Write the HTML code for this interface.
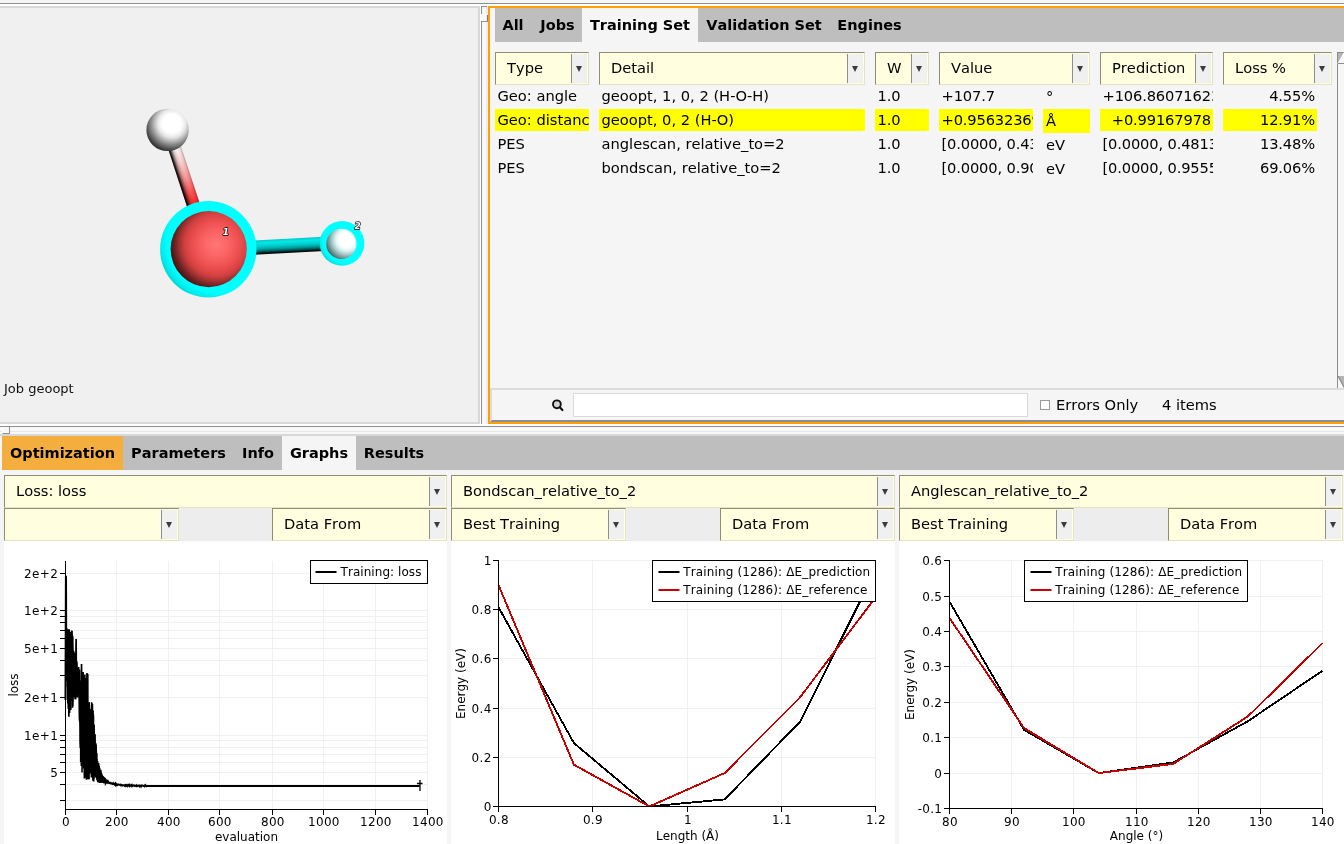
<!DOCTYPE html>
<html lang="en">
<head>
<meta charset="utf-8">
<title>ParAMS</title>
<style>
html,body{margin:0;padding:0;}
body{width:1344px;height:844px;overflow:hidden;background:#f5f5f5;position:relative;
 font-family:"DejaVu Sans","Liberation Sans",sans-serif;font-size:14.67px;color:#000;font-kerning:none;font-variant-ligatures:none;}
#w{position:absolute;left:0;top:0;width:1344px;height:844px;overflow:hidden;will-change:transform;}
.a{position:absolute;white-space:pre;overflow:hidden;}
.t{position:absolute;white-space:pre;}
svg{position:absolute;left:0;top:0;overflow:visible;}
svg text{font-family:"DejaVu Sans","Liberation Sans",sans-serif;font-kerning:none;}
/* tab bars */
.tabbar{position:absolute;background:#bebebe;height:34px;}
.tab{position:absolute;top:0;height:34px;line-height:34px;font-weight:bold;font-size:14.5px;white-space:pre;text-align:center;}
.tab.sel{background:#f5f5f5;}
.tab.org{background:#f4ae3e;}
/* combobox */
.cb{position:absolute;box-sizing:border-box;height:33px;background:#ffffe0;
 border-top:1px solid #8e8e76;border-left:1px solid #8e8e76;border-bottom:1px solid #e4e4c4;border-right:1px solid #e4e4c4;}
.cb .lb{position:absolute;left:11px;top:-1px;line-height:31px;white-space:pre;}
.cb .bt{position:absolute;right:1px;top:1px;bottom:1px;width:16px;background:#f0f0f0;border-left:1px solid #8e8e8e;box-sizing:border-box;}
.cb .bt:after{content:"";position:absolute;left:3.7px;top:12.2px;border-left:3.8px solid transparent;border-right:3.8px solid transparent;border-top:6.6px solid #3c3c3c;}
/* table rows */
.c{position:absolute;height:22px;line-height:22px;white-space:pre;overflow:hidden;box-sizing:border-box;padding:0 2px 0 2.5px;}
.c.r{text-align:right;padding:0 2px 0 0;}
.c.y{background:#ffff00;}
.c.n{letter-spacing:-0.15px;}
.c.u{height:24px;line-height:24px;padding-left:3px;}
</style>
</head>
<body>
<div id="w">
<!-- top window strips -->
<div class="a" style="left:0;top:3px;width:1344px;height:1px;background:#8f8f8f"></div>
<div class="a" style="left:0;top:4px;width:1344px;height:2px;background:#ffffff"></div>

<!-- left (molecule) panel -->
<div class="a" style="left:0;top:6px;width:480px;height:418px;background:#d8d8d8"></div>
<div class="a" style="left:0;top:8px;width:478px;height:414px;background:#f0f0f0"></div>
<div class="t" style="left:4px;top:381px;font-size:13px;line-height:16px;color:#111">Job geoopt</div>

<!-- vertical sash between panels -->
<div class="a" style="left:480px;top:6px;width:1px;height:418px;background:#ffffff"></div>
<div class="a" style="left:481px;top:6px;width:1px;height:418px;background:#8f8f8f"></div>
<div class="a" style="left:482px;top:6px;width:4px;height:418px;background:#f8f8f8"></div>
<div class="a" style="left:486px;top:6px;width:2px;height:418px;background:#e9ecf2"></div>
<!-- sash handle -->
<div class="a" style="left:481px;top:6px;width:6px;height:1px;background:#8f8f8f"></div>
<div class="a" style="left:480px;top:14px;width:7px;height:1px;background:#ffffff"></div>
<div class="a" style="left:487px;top:15px;width:1px;height:7px;background:#7a7a7a"></div>
<div class="a" style="left:481px;top:14px;width:1px;height:7px;background:#f8f8f8"></div>
<div class="a" style="left:481px;top:21px;width:7px;height:1px;background:#8f8f8f"></div>

<!-- table panel with orange focus border -->
<div class="a" style="left:488px;top:6px;width:900px;height:418px;box-sizing:border-box;border:2px solid #ffa000;background:#f5f5f5"></div>

<!-- top notebook tabs -->
<div class="tabbar" style="left:495px;top:8px;width:860px">
  <div class="tab" style="left:0;width:36px">All</div>
  <div class="tab" style="left:37px;width:51px">Jobs</div>
  <div class="tab sel" style="left:87px;width:116px">Training Set</div>
  <div class="tab" style="left:203px;width:132px">Validation Set</div>
  <div class="tab" style="left:335px;width:79px">Engines</div>
</div>

<!-- column header comboboxes -->
<div class="cb" style="left:495px;top:52px;width:94px"><span class="lb">Type</span><span class="bt"></span></div>
<div class="cb" style="left:599px;top:52px;width:266px"><span class="lb">Detail</span><span class="bt"></span></div>
<div class="cb" style="left:875px;top:52px;width:54px"><span class="lb">W</span><span class="bt"></span></div>
<div class="cb" style="left:939px;top:52px;width:151px"><span class="lb">Value</span><span class="bt"></span></div>
<div class="cb" style="left:1100px;top:52px;width:113px"><span class="lb">Prediction</span><span class="bt"></span></div>
<div class="cb" style="left:1223px;top:52px;width:109px"><span class="lb">Loss %</span><span class="bt"></span></div>

<!-- row 1 -->
<div class="c" style="left:495px;top:85px;width:94px">Geo: angle</div>
<div class="c" style="left:599px;top:85px;width:266px">geoopt, 1, 0, 2 (H-O-H)</div>
<div class="c n" style="left:875px;top:85px;width:54px">1.0</div>
<div class="c n" style="left:939px;top:85px;width:94px">+107.7</div>
<div class="c u" style="left:1043px;top:85px;width:47px">°</div>
<div class="c n" style="left:1100px;top:85px;width:113px">+106.86071623</div>
<div class="c n r" style="left:1223px;top:85px;width:94px">4.55%</div>
<!-- row 2 (selected) -->
<div class="c y" style="left:495px;top:109px;width:94px">Geo: distance</div>
<div class="c y" style="left:599px;top:109px;width:266px">geoopt, 0, 2 (H-O)</div>
<div class="c n y" style="left:875px;top:109px;width:54px">1.0</div>
<div class="c n y" style="left:939px;top:109px;width:94px">+0.95632369</div>
<div class="c y u" style="left:1043px;top:109px;width:47px">Å</div>
<div class="c n y r" style="left:1100px;top:109px;width:113px">+0.99167978</div>
<div class="c n y r" style="left:1223px;top:109px;width:94px">12.91%</div>
<!-- row 3 -->
<div class="c" style="left:495px;top:133px;width:94px">PES</div>
<div class="c" style="left:599px;top:133px;width:266px">anglescan, relative_to=2</div>
<div class="c n" style="left:875px;top:133px;width:54px">1.0</div>
<div class="c n" style="left:939px;top:133px;width:94px">[0.0000, 0.4382, 0.1271]</div>
<div class="c u" style="left:1043px;top:133px;width:47px">eV</div>
<div class="c n" style="left:1100px;top:133px;width:113px">[0.0000, 0.4813, 0.1224]</div>
<div class="c n r" style="left:1223px;top:133px;width:94px">13.48%</div>
<!-- row 4 -->
<div class="c" style="left:495px;top:157px;width:94px">PES</div>
<div class="c" style="left:599px;top:157px;width:266px">bondscan, relative_to=2</div>
<div class="c n" style="left:875px;top:157px;width:54px">1.0</div>
<div class="c n" style="left:939px;top:157px;width:94px">[0.0000, 0.9001, 0.1701]</div>
<div class="c u" style="left:1043px;top:157px;width:47px">eV</div>
<div class="c n" style="left:1100px;top:157px;width:113px">[0.0000, 0.9555, 0.2581]</div>
<div class="c n r" style="left:1223px;top:157px;width:94px">69.06%</div>

<!-- table vertical scrollbar -->
<div class="a" style="left:1337px;top:52px;width:10px;height:336px;background:#f7f7f7;border-left:1px solid #8c8c8c;border-top:1px solid #8c8c8c;box-sizing:border-box"></div>
<svg width="1344" height="844" viewBox="0 0 1344 844">
  <path d="M1338 64 L1338 53 L1344 53 Z" fill="#b4b4b4"/>
  <path d="M1338 64 L1344.5 52.5" stroke="#ffffff" stroke-width="1.4" fill="none"/>
  <rect x="1338" y="63" width="6" height="1" fill="#8c8c8c"/>
  <path d="M1338 376 L1344 376 L1344 388 Z" fill="#b4b4b4"/>
  <path d="M1338 376 L1344.5 388" stroke="#8c8c8c" stroke-width="1.2" fill="none"/>
</svg>

<!-- search / filter row (raised frame) -->
<div class="a" style="left:490px;top:388px;width:900px;height:34px;box-sizing:border-box;border-top:2px solid #dcdcdc;border-left:2px solid #dcdcdc;border-bottom:2px solid #8a8e94;background:#f5f5f5"></div>
<svg width="1344" height="844" viewBox="0 0 1344 844">
  <circle cx="556.9" cy="404.3" r="3.9" fill="#d4d4d4" stroke="#111" stroke-width="1.9"/>
  <path d="M559.8 407.3 L562.4 410.0" stroke="#111" stroke-width="2.2" stroke-linecap="round"/>
</svg>
<div class="a" style="left:573px;top:393px;width:455px;height:24px;box-sizing:border-box;border:1px solid #d9d9d9;background:#ffffff"></div>
<div class="a" style="left:1040px;top:400px;width:10px;height:10px;box-sizing:border-box;border:1px solid #9a9a9a;background:#ffffff"></div>
<div class="t" style="left:1056px;top:393px;line-height:24px">Errors Only</div>
<div class="t" style="left:1162px;top:393px;line-height:24px">4 items</div>

<!-- horizontal sash between top and bottom halves -->
<div class="a" style="left:0;top:424px;width:1344px;height:2px;background:#ffffff"></div>
<div class="a" style="left:0;top:426px;width:1344px;height:1px;background:#8f8f8f"></div>
<div class="a" style="left:0;top:427px;width:1344px;height:7px;background:#f8f8f8"></div>
<div class="a" style="left:0;top:431px;width:1344px;height:1px;background:#e6e6e6"></div>
<div class="a" style="left:0;top:434px;width:1344px;height:2px;background:#d8d8d8"></div>
<div class="a" style="left:2px;top:427px;width:8px;height:7px;box-sizing:border-box;background:#f8f8f8;border-left:1px solid #ffffff;border-right:1px solid #8f8f8f;border-bottom:1px solid #8f8f8f"></div>
<!-- molecule view -->
<svg width="480" height="424" viewBox="0 0 480 424">
  <defs>
    <radialGradient id="gH1" cx="0.60" cy="0.35" r="0.68" fx="0.60" fy="0.35">
      <stop offset="0" stop-color="#ffffff"/>
      <stop offset="0.33" stop-color="#ffffff"/>
      <stop offset="0.48" stop-color="#e8e8e8"/>
      <stop offset="0.58" stop-color="#c4c4c4"/>
      <stop offset="0.72" stop-color="#8e8e8e"/>
      <stop offset="0.86" stop-color="#5a5a5a"/>
      <stop offset="0.95" stop-color="#3a3a3a"/>
      <stop offset="1" stop-color="#262626"/>
    </radialGradient>
    <radialGradient id="gO" cx="0.60" cy="0.44" r="0.625" fx="0.60" fy="0.44">
      <stop offset="0" stop-color="#ff7676"/>
      <stop offset="0.24" stop-color="#fc6666"/>
      <stop offset="0.48" stop-color="#ee5050"/>
      <stop offset="0.64" stop-color="#d84242"/>
      <stop offset="0.70" stop-color="#c43c3c"/>
      <stop offset="0.78" stop-color="#9e3131"/>
      <stop offset="0.88" stop-color="#682121"/>
      <stop offset="1" stop-color="#3c1010"/>
    </radialGradient>
    <radialGradient id="gH2" cx="0.68" cy="0.36" r="0.74" fx="0.68" fy="0.36">
      <stop offset="0" stop-color="#ffffff"/>
      <stop offset="0.34" stop-color="#ffffff"/>
      <stop offset="0.5" stop-color="#dcf4f4"/>
      <stop offset="0.66" stop-color="#aacccc"/>
      <stop offset="0.82" stop-color="#789898"/>
      <stop offset="0.94" stop-color="#546e6e"/>
      <stop offset="1" stop-color="#3c5252"/>
    </radialGradient>
    <radialGradient id="gHalo" cx="0.60" cy="0.42" r="0.66" fx="0.60" fy="0.42">
      <stop offset="0" stop-color="#00ffff"/>
      <stop offset="0.8" stop-color="#00ffff"/>
      <stop offset="0.9" stop-color="#00eaea"/>
      <stop offset="1" stop-color="#00bcbc"/>
    </radialGradient>
    <linearGradient id="gB1" x1="0" y1="0" x2="1" y2="0">
      <stop offset="0" stop-color="#ffffff"/>
      <stop offset="0.1" stop-color="#fff4f4"/>
      <stop offset="0.29" stop-color="#ffd0d0"/>
      <stop offset="0.5" stop-color="#ff9c9c"/>
      <stop offset="0.71" stop-color="#ff5858"/>
      <stop offset="0.89" stop-color="#ff2a2a"/>
      <stop offset="1" stop-color="#f81818"/>
    </linearGradient>
    <linearGradient id="gB1s" x1="0" y1="0" x2="0" y2="1">
      <stop offset="0" stop-color="#000" stop-opacity="0.28"/>
      <stop offset="0.14" stop-color="#000" stop-opacity="0.08"/>
      <stop offset="0.38" stop-color="#000" stop-opacity="0"/>
      <stop offset="0.6" stop-color="#000" stop-opacity="0.12"/>
      <stop offset="0.76" stop-color="#000" stop-opacity="0.42"/>
      <stop offset="0.9" stop-color="#000" stop-opacity="0.85"/>
      <stop offset="1" stop-color="#000" stop-opacity="1"/>
    </linearGradient>
    <linearGradient id="gB2" x1="0" y1="0" x2="0" y2="1">
      <stop offset="0" stop-color="#00c8c8"/>
      <stop offset="0.2" stop-color="#08e6e6"/>
      <stop offset="0.45" stop-color="#00cccc"/>
      <stop offset="0.65" stop-color="#009c9c"/>
      <stop offset="0.8" stop-color="#005c5c"/>
      <stop offset="0.92" stop-color="#001414"/>
      <stop offset="1" stop-color="#000000"/>
    </linearGradient>
  </defs>
  <!-- bond O - H1 (white to red) -->
  <g transform="translate(168.7 129.9) rotate(71.8)">
    <rect x="14" y="-6.5" width="72" height="13" fill="url(#gB1)"/>
    <rect x="14" y="-6.5" width="72" height="13" fill="url(#gB1s)"/>
  </g>
  <!-- bond O - H2 (selected, cyan) -->
  <g transform="translate(208.7 249.9) rotate(-3)">
    <rect x="30" y="-7.1" width="100" height="14.2" fill="url(#gB2)"/>
  </g>
  <!-- H atom (0) -->
  <circle cx="167.6" cy="129.9" r="21.2" fill="url(#gH1)"/>
  <!-- O atom (1) with selection halo -->
  <circle cx="208.3" cy="249.3" r="48.2" fill="url(#gHalo)"/>
  <circle cx="208.7" cy="249.1" r="38.1" fill="url(#gO)"/>
  <!-- H atom (2) with selection halo -->
  <circle cx="342" cy="243.4" r="22.3" fill="url(#gHalo)"/>
  <circle cx="341.4" cy="243.9" r="15.1" fill="url(#gH2)"/>
  <!-- atom index labels -->
  <text x="222.8" y="235.2" font-size="9" font-style="italic" font-weight="bold" fill="#ffffff" stroke="#000000" stroke-width="1.35" paint-order="stroke" stroke-linejoin="round">1</text>
  <text x="354.6" y="228.8" font-size="9" font-style="italic" font-weight="bold" fill="#ffffff" stroke="#000000" stroke-width="1.35" paint-order="stroke" stroke-linejoin="round">2</text>
</svg>
<!-- bottom notebook tabs -->
<div class="tabbar" style="left:2px;top:436px;width:1350px">
  <div class="tab org" style="left:0;width:121px">Optimization</div>
  <div class="tab" style="left:121px;width:111px">Parameters</div>
  <div class="tab" style="left:232px;width:48px">Info</div>
  <div class="tab sel" style="left:280px;width:74px">Graphs</div>
  <div class="tab" style="left:354px;width:76px">Results</div>
</div>

<!-- graph 1 selectors -->
<div class="a" style="left:4px;top:508px;width:443px;height:33px;background:#ededed"></div>
<div class="cb" style="left:4px;top:475px;width:443px"><span class="lb">Loss: loss</span><span class="bt"></span></div>
<div class="cb" style="left:4px;top:508px;width:175px"><span class="lb"> </span><span class="bt"></span></div>
<div class="cb" style="left:272px;top:508px;width:175px"><span class="lb">Data From</span><span class="bt"></span></div>
<!-- graph 2 selectors -->
<div class="a" style="left:451px;top:508px;width:444px;height:33px;background:#ededed"></div>
<div class="cb" style="left:451px;top:475px;width:444px"><span class="lb">Bondscan_relative_to_2</span><span class="bt"></span></div>
<div class="cb" style="left:451px;top:508px;width:175px"><span class="lb">Best Training</span><span class="bt"></span></div>
<div class="cb" style="left:720px;top:508px;width:175px"><span class="lb">Data From</span><span class="bt"></span></div>
<!-- graph 3 selectors -->
<div class="a" style="left:899px;top:508px;width:444px;height:33px;background:#ededed"></div>
<div class="cb" style="left:899px;top:475px;width:444px"><span class="lb">Anglescan_relative_to_2</span><span class="bt"></span></div>
<div class="cb" style="left:899px;top:508px;width:175px"><span class="lb">Best Training</span><span class="bt"></span></div>
<div class="cb" style="left:1168px;top:508px;width:175px"><span class="lb">Data From</span><span class="bt"></span></div>

<!-- graph canvases -->
<div class="a" style="left:4px;top:541px;width:443px;height:303px;background:#ffffff"></div>
<div class="a" style="left:451px;top:541px;width:444px;height:303px;background:#ffffff"></div>
<div class="a" style="left:899px;top:541px;width:445px;height:303px;background:#ffffff"></div>
<!-- graphs -->
<svg width="1344" height="844" viewBox="0 0 1344 844" font-size="12px">
<g stroke="#f0f0f0" stroke-width="1" shape-rendering="crispEdges"><line x1="66.5" y1="800.5" x2="427.5" y2="800.5"/><line x1="66.5" y1="784.5" x2="427.5" y2="784.5"/><line x1="66.5" y1="772.5" x2="427.5" y2="772.5"/><line x1="66.5" y1="762.5" x2="427.5" y2="762.5"/><line x1="66.5" y1="754.5" x2="427.5" y2="754.5"/><line x1="66.5" y1="747.5" x2="427.5" y2="747.5"/><line x1="66.5" y1="740.5" x2="427.5" y2="740.5"/><line x1="66.5" y1="735.5" x2="427.5" y2="735.5"/><line x1="66.5" y1="697.5" x2="427.5" y2="697.5"/><line x1="66.5" y1="675.5" x2="427.5" y2="675.5"/><line x1="66.5" y1="660.5" x2="427.5" y2="660.5"/><line x1="66.5" y1="648.5" x2="427.5" y2="648.5"/><line x1="66.5" y1="638.5" x2="427.5" y2="638.5"/><line x1="66.5" y1="630.5" x2="427.5" y2="630.5"/><line x1="66.5" y1="622.5" x2="427.5" y2="622.5"/><line x1="66.5" y1="616.5" x2="427.5" y2="616.5"/><line x1="66.5" y1="610.5" x2="427.5" y2="610.5"/><line x1="66.5" y1="573.5" x2="427.5" y2="573.5"/><line x1="116.5" y1="561" x2="116.5" y2="808.5"/><line x1="168.5" y1="561" x2="168.5" y2="808.5"/><line x1="219.5" y1="561" x2="219.5" y2="808.5"/><line x1="272.5" y1="561" x2="272.5" y2="808.5"/><line x1="323.5" y1="561" x2="323.5" y2="808.5"/><line x1="375.5" y1="561" x2="375.5" y2="808.5"/><line x1="427.5" y1="561" x2="427.5" y2="808.5"/></g>
<path d="M65.5 700 L65.76 576 L66.02 577 L66.28 679.21 L66.53 628.77 L66.79 665.79 L67.05 628.38 L67.31 676.83 L67.57 635.19 L67.83 703.57 L68.09 643.72 L68.34 708.95 L68.6 640.38 L68.86 716.79 L69.12 629.56 L69.38 697.35 L69.64 683.05 L69.9 707.7 L70.15 631.88 L70.41 672.34 L70.67 699.33 L70.93 678.83 L71.19 639.18 L71.45 633.78 L71.71 630.65 L71.96 650.22 L72.22 635.08 L72.48 707.7 L72.74 636.18 L73 696.55 L73.26 680.51 L73.52 697.27 L73.77 664.12 L74.03 677.24 L74.29 656.59 L74.55 682.87 L74.81 653.63 L75.07 699.2 L75.33 656 L75.58 676.71 L75.84 662.02 L76.1 639 L76.36 669.31 L76.62 688.58 L76.88 661.49 L77.14 672.63 L77.39 677.59 L77.65 697.48 L77.91 673.62 L78.17 690.14 L78.43 693.51 L78.69 682.69 L78.95 669.91 L79.2 670.22 L79.46 669.66 L79.72 718.69 L79.98 707.25 L80.24 747.76 L80.5 687.8 L80.76 762.01 L81.01 707.29 L81.27 706.93 L81.53 664 L81.79 692.36 L82.05 678.55 L82.31 720.36 L82.57 702.92 L82.82 736.8 L83.08 672 L83.34 699.81 L83.6 765.61 L83.86 749.27 L84.12 712.54 L84.38 778.51 L84.63 718.25 L84.89 728.53 L85.15 777.83 L85.41 703.04 L85.67 678.01 L85.93 758.59 L86.19 713.57 L86.44 779.72 L86.7 689.67 L86.96 774.85 L87.22 673.62 L87.48 779.32 L87.74 674 L88 777.56 L88.25 702.82 L88.51 764.12 L88.77 757.9 L89.03 779.38 L89.29 712.37 L89.55 751.79 L89.81 760.16 L90.06 724.03 L90.32 757.27 L90.58 716 L90.84 711.28 L91.1 767.11 L91.36 760.81 L91.62 707.75 L91.87 703.18 L92.13 777.09 L92.39 704 L92.65 774.71 L92.91 716.8 L93.17 751.47 L93.43 715.29 L93.68 781.55 L93.94 729.39 L94.2 771.2 L94.46 741.35 L94.72 734.29 L94.98 753.08 L95.24 766.97 L95.49 752.34 L95.75 761.24 L96.01 744.53 L96.27 753.1 L96.53 767.83 L96.79 759.06 L97.05 771.28 L97.3 777.21 L97.56 761.01 L97.82 781.96 L98.08 768.03 L98.34 782.37 L98.6 763.12 L98.86 781.38 L99.11 765.67 L99.37 780.2 L99.63 767.83 L99.89 782.89 L100.15 769.78 L100.41 782.74 L100.67 771.98 L100.92 783.01 L101.18 780.05 L101.44 778.59 L101.7 773.55 L101.96 782.23 L102.22 775.39 L102.48 781.73 L102.73 776.05 L102.99 777.93 L103.25 783.07 L103.51 781.43 L103.77 778.09 L104.03 783.13 L104.29 777.52 L104.54 782.36 L104.8 778.22 L105.06 779.63 L105.32 778.56 L105.58 783.31 L105.84 782.84 L106.1 781.97 L106.35 779.54 L106.61 782.1 L106.87 780 L107.13 782.34 L107.39 783.28 L107.65 781.27 L107.91 781.96 L108.16 783.24 L108.42 782.1 L108.68 782.55 L108.94 782.48 L109.2 783.03 L109.46 783.18 L109.72 783.27 L109.97 782.85 L110.23 783.02 L110.49 782.78 L110.75 783.04 L111.01 783.72 L111.27 783.75 L111.53 783.82 L111.78 783.21 L112.04 783.24 L112.3 783.68 L112.56 783.93 L112.82 783.81 L113.08 783.35 L113.34 784.15 L113.59 784.06 L113.85 783.59 L114.11 783.78 L114.37 784.41 L114.63 783.95 L114.89 784.29 L115.15 783.81 L115.4 784.56 L115.66 783.93 L115.92 784.73 L116.18 784.21 L116.44 784.05 L116.7 784.84 L116.96 784.48 L117.21 784.44 L117.47 784.83 L117.73 784.36 L117.99 784.39 L118.25 784.44 L118.51 784.37 L118.77 784.61 L119.02 784.86 L119.28 784.75 L119.54 784.86 L119.8 784.92 L120.06 784.89 L120.32 784.53 L120.58 784.73 L120.83 785.26 L121.09 784.94 L121.35 785.17 L121.61 784.78 L121.87 784.92 L122.13 785.41 L122.39 785.24 L122.64 785.57 L122.9 785.31 L123.16 785.24 L123.42 785.2 L123.68 785.24 L123.94 785.46 L124.2 785.69 L124.45 785.36 L124.71 785.63 L124.97 785 L125.23 784.97 L125.49 784.99 L125.75 785.64 L126.01 785.09 L126.26 785.56 L126.52 785.78 L126.78 785.2 L127.04 785.38 L127.3 785.92 L127.56 785.2 L127.82 785.52 L128.07 785.24 L128.33 785.72 L128.59 785.58 L128.85 785.11 L129.11 785.66 L129.37 785.16 L129.63 785.82 L129.88 785.22 L130.14 785.17 L130.4 785.38 L130.66 785.53 L130.92 785.89 L131.18 785.3 L131.44 785.68 L131.69 785.26 L131.95 785.81 L132.21 785.26 L132.47 785.77 L132.73 785.29 L132.99 785.28 L133.25 785.63 L133.5 785.73 L133.76 785.48 L134.02 785.72 L134.28 785.36 L134.54 785.31 L134.8 785.55 L135.06 785.97 L135.31 785.74 L135.57 785.61 L135.83 785.53 L136.09 785.97 L136.35 785.49 L136.61 786.17 L136.87 786.08 L137.12 785.79 L137.38 785.71 L137.64 785.98 L137.9 785.68 L138.16 786.01 L138.42 785.75 L138.68 785.44 L138.93 785.47 L139.19 785.64 L139.45 785.49 L139.71 786.21 L139.97 785.69 L140.23 785.71 L140.49 785.59 L140.74 785.69 L141 786.34 L141.26 785.69 L141.52 785.75 L141.78 785.48 L142.04 785.91 L142.3 785.67 L142.55 785.5 L142.81 785.58 L143.07 785.54 L143.33 785.78 L143.59 786.04 L143.85 786.19 L144.11 786.17 L144.36 785.88 L144.62 786.42 L144.88 786.19 L145.14 785.58 L145.4 786.35 L145.66 786.21 L145.92 785.68 L146.17 786 L146.43 786.27 L146.69 786.08 L146.95 786.17 L419.48 786.1" fill="none" stroke="#000" stroke-width="1.7" stroke-linejoin="miter"/>
<path d="M65.5 700 L65.76 576 L66.02 577 L66.28 579.57 L66.53 661.71 L66.79 652.57 L67.05 680.65 L67.31 630.25 L67.57 652.92 L67.83 673.89 L68.09 680.53 L68.34 644.48 L68.6 706.24 L68.86 629.13 L69.12 704.81 L69.38 653.9 L69.64 713.1 L69.9 675.81 L70.15 699.63 L70.41 632.28 L70.67 708.49 L70.93 709.82 L71.19 663.08 L71.45 690.48 L71.71 677.73 L71.96 630.76 L72.22 700.88 L72.48 645.92 L72.74 706.15 L73 698.11 L73.26 692.15 L73.52 650.57 L73.77 664.99 L74.03 651.76 L74.29 657.83 L74.55 659.87 L74.81 682.87 L75.07 657.76 L75.33 686.51 L75.58 656.5 L75.84 699.2 L76.1 686.97 L76.36 695.69 L76.62 680.94 L76.88 696.3 L77.14 696.14 L77.39 667.88 L77.65 681.99 L77.91 677.66 L78.17 675 L78.43 681.59 L78.69 667.1 L78.95 695.23 L79.2 698.04 L79.46 720.42 L79.72 722 L79.98 683.76 L80.24 680.69 L80.5 744.12 L80.76 685.42 L81.01 746.4 L81.27 765.95 L81.53 750.15 L81.79 672.21 L82.05 772.44 L82.31 719.4 L82.57 673.61 L82.82 692.18 L83.08 747.21 L83.34 697.9 L83.6 714.03 L83.86 675.38 L84.12 733.4 L84.38 698.75 L84.63 731.72 L84.89 674.41 L85.15 774.33 L85.41 681.23 L85.67 685.69 L85.93 681.22 L86.19 735.29 L86.44 679.15 L86.7 777.7 L86.96 673.12 L87.22 704.66 L87.48 734.54 L87.74 762.52 L88 728.14 L88.25 739.05 L88.51 762.23 L88.77 705.93 L89.03 709.75 L89.29 702.14 L89.55 773.42 L89.81 748.13 L90.06 760.21 L90.32 757.08 L90.58 709.06 L90.84 773.54 L91.1 759.45 L91.36 777.43 L91.62 702.3 L91.87 726.61 L92.13 745.05 L92.39 758.44 L92.65 754.04 L92.91 780.86 L93.17 710.6 L93.43 773.09 L93.68 725.25 L93.94 778.66 L94.2 724.84 L94.46 773.14 L94.72 770.17 L94.98 734.37 L95.24 758.64 L95.49 769.59 L95.75 743.11 L96.01 747.09 L96.27 754.8 L96.53 763.53 L96.79 753.13 L97.05 780.4 L97.3 773.65 L97.56 766.11 L97.82 776.46 L98.08 773.33 L98.34 764.57 L98.6 774.85 L98.86 776.7 L99.11 780.39 L99.37 770.22 L99.63 781.15 L99.89 776.38 L100.15 782.94 L100.41 775.41 L100.67 771.84 L100.92 771.55 L101.18 778.57 L101.44 776.38 L101.7 775.75 L101.96 776.57 L102.22 782.28 L102.48 776.25 L102.73 776.49 L102.99 781.7 L103.25 782.96 L103.51 776.77 L103.77 783.1 L104.03 777.25 L104.29 781.78 L104.54 777.8 L104.8 779.13 L105.06 780.08 L105.32 783.16 L105.58 779.79 L105.84 782.7 L106.1 780 L106.35 783.07 L106.61 779.8 L106.87 783.21 L107.13 780.53 L107.39 781.76 L107.65 781.32 L107.91 783.45 L108.16 782.14" fill="none" stroke="#000" stroke-width="1.5" stroke-linejoin="miter"/>
<path d="M66.53 637 L67.05 637.25 L67.57 637.5 L68.09 637.75 L68.6 638 L69.12 638.27 L69.64 638.53 L70.15 638.8 L70.67 639.07 L71.19 639.33 L71.71 639.6 L72.22 639.87 L72.74 644.75 L73.26 654.25 L73.77 659.71 L74.29 661.14 L74.81 662.57 L75.33 664 L75.84 665.43 L76.36 666.86 L76.88 668.04 L77.39 669.69 L77.91 671.91 L78.43 674.14 L78.95 676.36 L79.46 678.33 L79.98 679.67 L80.5 681 L81.01 681.08 L81.53 681.15 L82.05 681.23 L82.57 681.31 L83.08 681.38 L83.6 681.46 L84.12 681.54 L84.63 681.62 L85.15 681.69 L85.67 681.77 L86.19 681.85 L86.7 681.92 L87.22 682 L87.74 695.5 L88.25 709 L88.77 709.33 L89.29 709.67 L89.81 710 L90.32 710.33 L90.84 710.67 L91.36 711 L91.87 711.33 L92.39 711.67 L92.91 712 L93.43 721.5 L93.94 731 L94.46 736.5 L94.98 742 L95.49 747.75 L96.01 752.76 L96.53 757.27 L97.05 761.78 L97.56 763.65 L98.08 765.52 L98.6 767.39 L99.11 769.25 L99.63 771.12 L100.15 772.56 L100.67 773.57 L101.18 774.57 L101.7 775.57 L102.22 776.57 L102.73 777.57 L103.25 777.97 L103.77 778.37 L104.29 778.76 L104.8 779.16 L105.32 779.56 L105.84 779.95 L106.35 780.35 L106.87 780.75 L107.39 781.09 L107.91 781.44 L108.42 781.78 L108.94 782.13 L109.46 782.47 L109.97 782.82 L110.49 782.92 L111.01 783.03 L111.53 783.13 L112.04 783.24 L112.56 783.34 L113.08 783.45 L113.59 783.55 L114.11 783.65 L114.63 783.76 L115.15 783.86 L115.66 783.97 L116.18 784.06 L116.7 784.14 L117.21 784.22 L117.73 784.3 L118.25 784.38 L118.77 784.46 L119.28 784.54 L119.8 784.62 L120.32 784.7 L120.83 784.78 L121.35 784.84 L121.87 784.87 L122.39 784.9 L122.9 784.93 L123.42 784.96 L123.94 785 L124.45 785.03 L124.45 785.71 L123.94 785.68 L123.42 785.64 L122.9 785.61 L122.39 785.58 L121.87 785.55 L121.35 785.52 L120.83 785.46 L120.32 785.38 L119.8 785.3 L119.28 785.22 L118.77 785.14 L118.25 785.06 L117.73 784.98 L117.21 784.9 L116.7 784.82 L116.18 784.74 L115.66 784.65 L115.15 784.54 L114.63 784.44 L114.11 784.33 L113.59 784.23 L113.08 784.13 L112.56 784.02 L112.04 783.92 L111.53 783.81 L111.01 783.71 L110.49 783.6 L109.97 783.5 L109.46 783.43 L108.94 783.35 L108.42 783.28 L107.91 783.21 L107.39 783.13 L106.87 783.06 L106.35 782.98 L105.84 782.9 L105.32 782.82 L104.8 782.74 L104.29 782.67 L103.77 782.59 L103.25 782.51 L102.73 782.43 L102.22 782.27 L101.7 782.12 L101.18 781.96 L100.67 781.81 L100.15 781.61 L99.63 781.33 L99.11 781 L98.6 780.66 L98.08 780.32 L97.56 779.99 L97.05 779.65 L96.53 778.97 L96.01 778.3 L95.49 777.62 L94.98 776.95 L94.46 776.3 L93.94 775.65 L93.43 774.6 L92.91 773.54 L92.39 773.4 L91.87 773.26 L91.36 773.12 L90.84 772.98 L90.32 772.84 L89.81 772.7 L89.29 772.56 L88.77 772.42 L88.25 772.28 L87.74 770.82 L87.22 769.36 L86.7 769.25 L86.19 769.13 L85.67 769.02 L85.15 768.9 L84.63 768.79 L84.12 768.68 L83.6 768.56 L83.08 768.45 L82.57 768.33 L82.05 764.05 L81.53 759.77 L81.01 755.48 L80.5 751.2 L79.98 728 L79.46 710 L78.95 694.6 L78.43 692.51 L77.91 690.43 L77.39 688.34 L76.88 687.14 L76.36 686.81 L75.84 686.48 L75.33 686.15 L74.81 685.82 L74.29 685.79 L73.77 685.93 L73.26 688.67 L72.74 694 L72.22 699.33 L71.71 700.57 L71.19 697.71 L70.67 694.86 L70.15 692 L69.64 700 L69.12 708 L68.6 699.5 L68.09 691 L67.57 689.33 L67.05 687.67 L66.53 686 Z" fill="#000"/>
<line x1="143.07" y1="786" x2="419.48" y2="786" stroke="#000" stroke-width="2"/>
<path d="M419.98 780 V791 M416.98 783.5 H422.48" stroke="#000" stroke-width="1.3" fill="none"/>
<g stroke="#000" stroke-width="1" shape-rendering="crispEdges"><line x1="65.5" y1="561" x2="65.5" y2="810"/><line x1="65" y1="809.5" x2="428" y2="809.5"/><line x1="60" y1="800.5" x2="65.5" y2="800.5"/><line x1="60" y1="784.5" x2="65.5" y2="784.5"/><line x1="60" y1="772.5" x2="65.5" y2="772.5"/><line x1="60" y1="762.5" x2="65.5" y2="762.5"/><line x1="60" y1="754.5" x2="65.5" y2="754.5"/><line x1="60" y1="747.5" x2="65.5" y2="747.5"/><line x1="60" y1="740.5" x2="65.5" y2="740.5"/><line x1="60" y1="735.5" x2="65.5" y2="735.5"/><line x1="60" y1="697.5" x2="65.5" y2="697.5"/><line x1="60" y1="675.5" x2="65.5" y2="675.5"/><line x1="60" y1="660.5" x2="65.5" y2="660.5"/><line x1="60" y1="648.5" x2="65.5" y2="648.5"/><line x1="60" y1="638.5" x2="65.5" y2="638.5"/><line x1="60" y1="630.5" x2="65.5" y2="630.5"/><line x1="60" y1="622.5" x2="65.5" y2="622.5"/><line x1="60" y1="616.5" x2="65.5" y2="616.5"/><line x1="60" y1="610.5" x2="65.5" y2="610.5"/><line x1="60" y1="573.5" x2="65.5" y2="573.5"/><line x1="65.5" y1="809.5" x2="65.5" y2="815"/><line x1="116.5" y1="809.5" x2="116.5" y2="815"/><line x1="168.5" y1="809.5" x2="168.5" y2="815"/><line x1="219.5" y1="809.5" x2="219.5" y2="815"/><line x1="272.5" y1="809.5" x2="272.5" y2="815"/><line x1="323.5" y1="809.5" x2="323.5" y2="815"/><line x1="375.5" y1="809.5" x2="375.5" y2="815"/><line x1="427.5" y1="809.5" x2="427.5" y2="815"/></g>
<g fill="#000"><text x="58.3" y="577.7" text-anchor="end" letter-spacing="0.4">2e+2</text><text x="58.3" y="614.7" text-anchor="end" letter-spacing="0.4">1e+2</text><text x="58.3" y="652.7" text-anchor="end" letter-spacing="0.4">5e+1</text><text x="58.3" y="701.7" text-anchor="end" letter-spacing="0.4">2e+1</text><text x="58.3" y="739.7" text-anchor="end" letter-spacing="0.4">1e+1</text><text x="58.3" y="776.7" text-anchor="end" letter-spacing="0.4">5</text><text x="65.9" y="826" text-anchor="middle" letter-spacing="0.3">0</text><text x="116.9" y="826" text-anchor="middle" letter-spacing="0.3">200</text><text x="168.9" y="826" text-anchor="middle" letter-spacing="0.3">400</text><text x="219.9" y="826" text-anchor="middle" letter-spacing="0.3">600</text><text x="272.9" y="826" text-anchor="middle" letter-spacing="0.3">800</text><text x="323.9" y="826" text-anchor="middle" letter-spacing="0.3">1000</text><text x="375.9" y="826" text-anchor="middle" letter-spacing="0.3">1200</text><text x="427.9" y="826" text-anchor="middle" letter-spacing="0.3">1400</text><text x="246.5" y="841" text-anchor="middle">evaluation</text><text transform="translate(17.5 685) rotate(-90)" text-anchor="middle">loss</text></g>
<rect x="310.5" y="560.5" width="117" height="23" fill="#fff" stroke="#000" stroke-width="1"/>
<line x1="315.5" y1="572" x2="336.5" y2="572" stroke="#000" stroke-width="2"/>
<text x="340.5" y="576.3" letter-spacing="0.06">Training: loss</text>
<!-- bondscan graph -->
<g stroke="#f0f0f0" stroke-width="1" shape-rendering="crispEdges"><line x1="499.5" y1="757.5" x2="875.5" y2="757.5"/><line x1="499.5" y1="708.5" x2="875.5" y2="708.5"/><line x1="499.5" y1="658.5" x2="875.5" y2="658.5"/><line x1="499.5" y1="609.5" x2="875.5" y2="609.5"/><line x1="499.5" y1="560.5" x2="875.5" y2="560.5"/><line x1="592.5" y1="560.5" x2="592.5" y2="805.5"/><line x1="687.5" y1="560.5" x2="687.5" y2="805.5"/><line x1="781.5" y1="560.5" x2="781.5" y2="805.5"/><line x1="875.5" y1="560.5" x2="875.5" y2="805.5"/></g>
<clipPath id="c498"><rect x="498.5" y="560" width="378" height="247.5"/></clipPath>
<path d="M498.5 607.24 L573.9 743.03 L649.3 806.5 L724.7 799.37 L800.1 721.63 L875.5 570.34" fill="none" stroke="#000" stroke-width="1.9" stroke-linejoin="round" shape-rendering="crispEdges" clip-path="url(#c498)"/>
<path d="M498.5 585.1 L573.9 764.68 L649.3 806.5 L724.7 773.04 L800.1 697.28 L875.5 597.4" fill="none" stroke="#c80000" stroke-width="1.9" stroke-linejoin="round" shape-rendering="crispEdges" clip-path="url(#c498)"/>
<g stroke="#000" stroke-width="1" shape-rendering="crispEdges"><line x1="498.5" y1="560.5" x2="498.5" y2="807"/><line x1="498" y1="806.5" x2="876" y2="806.5"/><line x1="493" y1="806.5" x2="498.5" y2="806.5"/><line x1="493" y1="757.5" x2="498.5" y2="757.5"/><line x1="493" y1="708.5" x2="498.5" y2="708.5"/><line x1="493" y1="658.5" x2="498.5" y2="658.5"/><line x1="493" y1="609.5" x2="498.5" y2="609.5"/><line x1="493" y1="560.5" x2="498.5" y2="560.5"/><line x1="498.5" y1="806.5" x2="498.5" y2="812"/><line x1="592.5" y1="806.5" x2="592.5" y2="812"/><line x1="687.5" y1="806.5" x2="687.5" y2="812"/><line x1="781.5" y1="806.5" x2="781.5" y2="812"/><line x1="875.5" y1="806.5" x2="875.5" y2="812"/></g>
<g fill="#000"><text x="491.6" y="810.7" text-anchor="end" letter-spacing="0.3">0</text><text x="491.6" y="761.7" text-anchor="end" letter-spacing="0.3">0.2</text><text x="491.6" y="712.7" text-anchor="end" letter-spacing="0.3">0.4</text><text x="491.6" y="662.7" text-anchor="end" letter-spacing="0.3">0.6</text><text x="491.6" y="613.7" text-anchor="end" letter-spacing="0.3">0.8</text><text x="491.6" y="564.7" text-anchor="end" letter-spacing="0.3">1</text><text x="498.9" y="823.5" text-anchor="middle" letter-spacing="0.3">0.8</text><text x="592.9" y="823.5" text-anchor="middle" letter-spacing="0.3">0.9</text><text x="687.9" y="823.5" text-anchor="middle" letter-spacing="0.3">1</text><text x="781.9" y="823.5" text-anchor="middle" letter-spacing="0.3">1.1</text><text x="875.9" y="823.5" text-anchor="middle" letter-spacing="0.3">1.2</text><text x="687.5" y="840" text-anchor="middle">Length (Å)</text><text transform="translate(465.3 683.5) rotate(-90)" text-anchor="middle">Energy (eV)</text></g>
<rect x="652.5" y="560.5" width="223" height="41" fill="#fff" stroke="#000" stroke-width="1"/>
<line x1="658.5" y1="572" x2="679.5" y2="572" stroke="#000" stroke-width="2"/>
<line x1="658.5" y1="590" x2="679.5" y2="590" stroke="#c80000" stroke-width="2"/>
<text x="683.2" y="576.3" letter-spacing="0.14">Training (1286): ΔE_prediction</text>
<text x="683.2" y="594.3" letter-spacing="0.14">Training (1286): ΔE_reference</text>
<!-- anglescan graph -->
<g stroke="#f0f0f0" stroke-width="1" shape-rendering="crispEdges"><line x1="950.5" y1="773.5" x2="1322.5" y2="773.5"/><line x1="950.5" y1="737.5" x2="1322.5" y2="737.5"/><line x1="950.5" y1="702.5" x2="1322.5" y2="702.5"/><line x1="950.5" y1="666.5" x2="1322.5" y2="666.5"/><line x1="950.5" y1="631.5" x2="1322.5" y2="631.5"/><line x1="950.5" y1="596.5" x2="1322.5" y2="596.5"/><line x1="950.5" y1="560.5" x2="1322.5" y2="560.5"/><line x1="1011.5" y1="560.6" x2="1011.5" y2="807.5"/><line x1="1073.5" y1="560.6" x2="1073.5" y2="807.5"/><line x1="1136.5" y1="560.6" x2="1136.5" y2="807.5"/><line x1="1198.5" y1="560.6" x2="1198.5" y2="807.5"/><line x1="1260.5" y1="560.6" x2="1260.5" y2="807.5"/><line x1="1322.5" y1="560.6" x2="1322.5" y2="807.5"/></g>
<clipPath id="c949"><rect x="949.5" y="560.1" width="374" height="249.4"/></clipPath>
<path d="M949.5 601.68 L1024.1 729.88 L1098.7 773.09 L1173.3 762.46 L1247.9 721.2 L1322.5 670.74" fill="none" stroke="#000" stroke-width="1.9" stroke-linejoin="round" shape-rendering="crispEdges" clip-path="url(#c949)"/>
<path d="M949.5 617.97 L1024.1 728.11 L1098.7 773.09 L1173.3 763.88 L1247.9 716.42 L1322.5 643.12" fill="none" stroke="#c80000" stroke-width="1.9" stroke-linejoin="round" shape-rendering="crispEdges" clip-path="url(#c949)"/>
<g stroke="#000" stroke-width="1" shape-rendering="crispEdges"><line x1="949.5" y1="560.6" x2="949.5" y2="809"/><line x1="949" y1="808.5" x2="1323" y2="808.5"/><line x1="944" y1="808.5" x2="949.5" y2="808.5"/><line x1="944" y1="773.5" x2="949.5" y2="773.5"/><line x1="944" y1="737.5" x2="949.5" y2="737.5"/><line x1="944" y1="702.5" x2="949.5" y2="702.5"/><line x1="944" y1="666.5" x2="949.5" y2="666.5"/><line x1="944" y1="631.5" x2="949.5" y2="631.5"/><line x1="944" y1="596.5" x2="949.5" y2="596.5"/><line x1="944" y1="560.5" x2="949.5" y2="560.5"/><line x1="949.5" y1="808.5" x2="949.5" y2="814"/><line x1="1011.5" y1="808.5" x2="1011.5" y2="814"/><line x1="1073.5" y1="808.5" x2="1073.5" y2="814"/><line x1="1136.5" y1="808.5" x2="1136.5" y2="814"/><line x1="1198.5" y1="808.5" x2="1198.5" y2="814"/><line x1="1260.5" y1="808.5" x2="1260.5" y2="814"/><line x1="1322.5" y1="808.5" x2="1322.5" y2="814"/></g>
<g fill="#000"><text x="942.3" y="812.7" text-anchor="end" letter-spacing="0.3">-0.1</text><text x="942.3" y="777.7" text-anchor="end" letter-spacing="0.3">0</text><text x="942.3" y="741.7" text-anchor="end" letter-spacing="0.3">0.1</text><text x="942.3" y="706.7" text-anchor="end" letter-spacing="0.3">0.2</text><text x="942.3" y="670.7" text-anchor="end" letter-spacing="0.3">0.3</text><text x="942.3" y="635.7" text-anchor="end" letter-spacing="0.3">0.4</text><text x="942.3" y="600.7" text-anchor="end" letter-spacing="0.3">0.5</text><text x="942.3" y="564.7" text-anchor="end" letter-spacing="0.3">0.6</text><text x="949.9" y="825.5" text-anchor="middle" letter-spacing="0.3">80</text><text x="1011.9" y="825.5" text-anchor="middle" letter-spacing="0.3">90</text><text x="1073.9" y="825.5" text-anchor="middle" letter-spacing="0.3">100</text><text x="1136.9" y="825.5" text-anchor="middle" letter-spacing="0.3">110</text><text x="1198.9" y="825.5" text-anchor="middle" letter-spacing="0.3">120</text><text x="1260.9" y="825.5" text-anchor="middle" letter-spacing="0.3">130</text><text x="1322.9" y="825.5" text-anchor="middle" letter-spacing="0.3">140</text><text x="1136.5" y="840" text-anchor="middle">Angle (°)</text><text transform="translate(913.7 684.55) rotate(-90)" text-anchor="middle">Energy (eV)</text></g>
<rect x="1024.5" y="560.5" width="223" height="41" fill="#fff" stroke="#000" stroke-width="1"/>
<line x1="1030.5" y1="572" x2="1051.5" y2="572" stroke="#000" stroke-width="2"/>
<line x1="1030.5" y1="590" x2="1051.5" y2="590" stroke="#c80000" stroke-width="2"/>
<text x="1055.2" y="576.3" letter-spacing="0.14">Training (1286): ΔE_prediction</text>
<text x="1055.2" y="594.3" letter-spacing="0.14">Training (1286): ΔE_reference</text>
</svg>
</div></body></html>
